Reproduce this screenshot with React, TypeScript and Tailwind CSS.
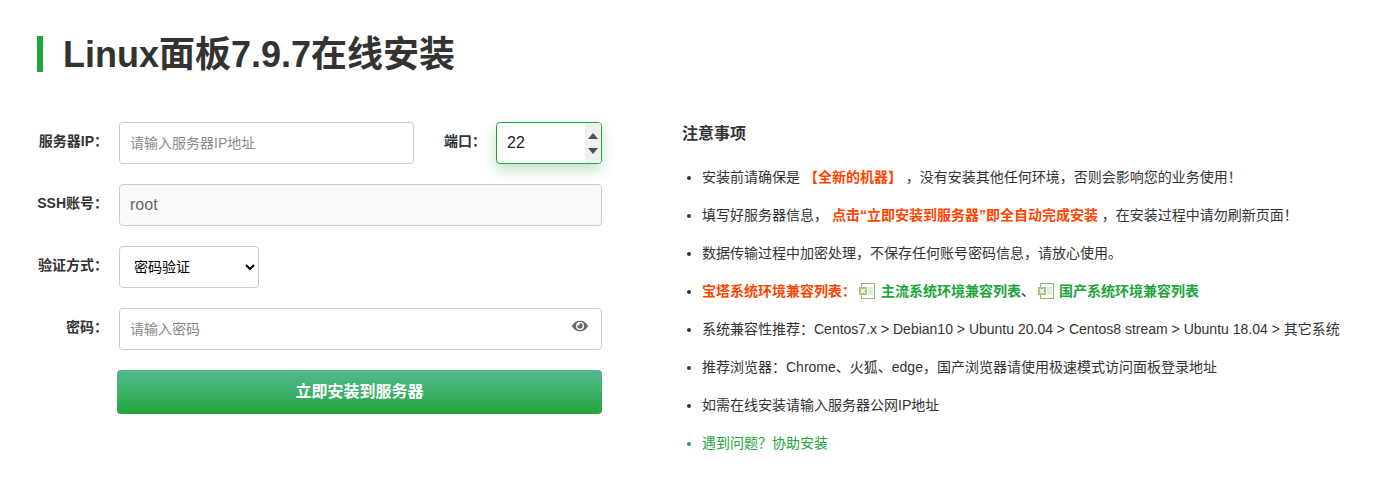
import { FaEye } from "react-icons/fa";

function ExcelIcon() {
  return (
    <svg width="16" height="16" viewBox="0 0 16 16" className="block shrink-0">
      <rect x="2.5" y="0.5" width="13" height="15" fill="#fff" stroke="#8fbc6a" />
      <rect x="9" y="4" width="5" height="8" fill="#dfeed4" />
      <rect x="0" y="4" width="8" height="8" fill="#a3c585" />
      <path d="M2 6l4 4M6 6l-4 4" stroke="#fff" strokeWidth="1.4" />
    </svg>
  );
}

function Label({ children, className = "w-[71px] text-right" }: { children: React.ReactNode; className?: string }) {
  return <label className={`${className} shrink-0 self-start whitespace-nowrap text-[14px] font-bold leading-[38px] text-[#333]`}>{children}</label>;
}

const inputCls =
  "h-[42px] rounded-[4px] border border-[#ccc] px-[10px] text-[14px] placeholder:text-[#8a8a8a] outline-none";

const Accent = ({ children }: { children: React.ReactNode }) => <span className="font-bold text-[#ff4500]">{children}</span>;
const Green = ({ children }: { children: React.ReactNode }) => <span className="font-bold text-[#20a53a]">{children}</span>;

export default function App() {
  return (
    <div className="h-[493px] w-[1380px] overflow-hidden bg-white pl-[37px] pt-[36px] font-['Liberation_Sans','Noto_Sans_CJK_SC',sans-serif] text-[#333]">
      <h1 className="h-[36px] border-l-[6px] border-[#20a53a] pl-[20px] text-[36px] font-bold leading-[38px] text-[#333]">Linux面板7.9.7在线安装</h1>

      <div className="mt-[50px] flex">
        <form className="flex w-[565px] shrink-0 flex-col gap-[20px]">
          <div className="flex items-center gap-[11px]">
            <Label>服务器IP：</Label>
            <input className={`${inputCls} w-[295px] bg-white text-[#555]`} placeholder="请输入服务器IP地址" />
            <div className="ml-[19px] flex items-center gap-[10px]">
              <Label className="w-[42px]">端口：</Label>
              <div className="flex h-[42px] w-[106px] overflow-hidden rounded-[4px] border border-[#20a53a] bg-white shadow-[0_6px_14px_rgba(32,165,58,0.3)]">
                <span className="flex-1 pl-[10px] text-[16px] leading-[40px] text-[#222]">22</span>
                <span className="flex w-[16px] flex-col items-center justify-around bg-[#f0f0f0] py-[5px]">
                  <svg width="10" height="6" viewBox="0 0 10 6"><path d="M5 0l5 6H0z" fill="#505050" /></svg>
                  <svg width="10" height="6" viewBox="0 0 10 6"><path d="M5 6L0 0h10z" fill="#505050" /></svg>
                </span>
              </div>
            </div>
          </div>
          <div className="flex items-center gap-[11px]">
            <Label>SSH账号：</Label>
            <input className={`${inputCls} w-[483px] bg-[#f9f9f9] text-[16px] text-[#666]`} defaultValue="root" readOnly />
          </div>
          <div className="flex items-center gap-[11px]">
            <Label>验证方式：</Label>
            <select className={`${inputCls} w-[140px] bg-white text-black`} defaultValue="密码验证">
              <option>密码验证</option>
              <option>私钥验证</option>
            </select>
          </div>
          <div className="flex items-center gap-[11px]">
            <Label>密码：</Label>
            <div className="relative w-[483px]">
              <input className={`${inputCls} w-full bg-white text-[#555]`} placeholder="请输入密码" />
              <FaEye className="absolute right-[14px] top-[10px] text-[16px] text-[#6b6b6b]" />
            </div>
          </div>
          <button type="button" className="ml-[80px] h-[44px] w-[485px] rounded-[4px] bg-gradient-to-b from-[#52b98f] to-[#20a53a] text-[16px] font-bold text-white">立即安装到服务器</button>
        </form>

        <div className="ml-[80px] flex-1">
          <h2 className="text-[16px] font-bold leading-[24px] text-[#333]">注意事项</h2>
          <ul className="mt-[20px] list-disc pl-[20px] text-[14px] leading-[22px] text-[#333] [&>li]:mb-[16px]">
            <li>安装前请确保是 <Accent>【全新的机器】</Accent> ，没有安装其他任何环境，否则会影响您的业务使用！</li>
            <li>填写好服务器信息， <Accent>点击“立即安装到服务器”即全自动完成安装</Accent> ，在安装过程中请勿刷新页面！</li>
            <li>数据传输过程中加密处理，不保存任何账号密码信息，请放心使用。</li>
            <li>
              <span className="inline-flex items-center align-top">
                <Accent>宝塔系统环境兼容列表：</Accent>
                <span className="ml-[3px] mr-[6px]"><ExcelIcon /></span>
                <Green>主流系统环境兼容列表</Green>
                <span>、</span>
                <span className="ml-[3px] mr-[5px]"><ExcelIcon /></span>
                <Green>国产系统环境兼容列表</Green>
              </span>
            </li>
            <li>系统兼容性推荐：Centos7.x &gt; Debian10 &gt; Ubuntu 20.04 &gt; Centos8 stream &gt; Ubuntu 18.04 &gt; 其它系统</li>
            <li>推荐浏览器：Chrome、火狐、edge，国产浏览器请使用极速模式访问面板登录地址</li>
            <li>如需在线安装请输入服务器公网IP地址</li>
            <li className="text-[#20a53a]">遇到问题？协助安装</li>
          </ul>
        </div>
      </div>
    </div>
  );
}
